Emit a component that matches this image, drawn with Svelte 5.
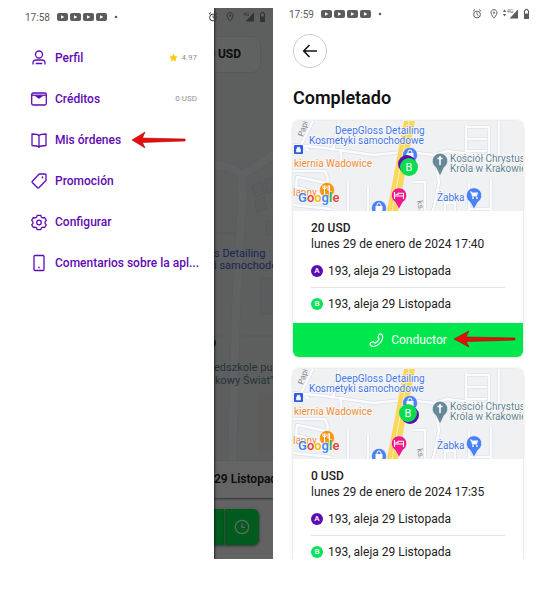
<script>
  let menu = [
    { id: 'profile', label: 'Perfil', value: '4.97', star: true },
    { id: 'wallet', label: 'Créditos', value: '0 USD' },
    { id: 'orders', label: 'Mis órdenes', marked: true },
    { id: 'promo', label: 'Promoción' },
    { id: 'settings', label: 'Configurar' },
    { id: 'feedback', label: 'Comentarios sobre la apl...' }
  ];

  let orders = [
    { price: '20 USD', date: 'lunes 29 de enero de 2024 17:40', from: '193, aleja 29 Listopada', to: '193, aleja 29 Listopada', driver: true, markerX: 116, markerY: 46, underX: 114, underY: 43 },
    { price: '0 USD', date: 'lunes 29 de enero de 2024 17:35', from: '193, aleja 29 Listopada', to: '193, aleja 29 Listopada', driver: false, markerX: 115, markerY: 44, underX: 117, underY: 46 }
  ];

  // shared by the dark edge and the light fill of the small streets
  const streets = 'M0 24L32 27 80 34 112 31 142 34 154 30 230 40M20 0L8 24 16 30M0 50H32Q36 58 34 62L4 56 3 66 26 72M55 62V90M75 90V65M142 32L146 62 140 90M173 4V46M173 6H196V45M173 18H194M173 30H194M170 46H230M120 61H132V90M152 90V82H162V90M176 90V62M198 90V58M176 88H198M48 30V50M0 84L38 88M40 30L46 0M206 0V40';
  const avenue = 'M200 155Q232 157 241 167Q250 163 276 145M241 165Q244 185 241 210L236 300 232 460';
</script>

{#snippet notifications(time)}
  <span class="time">{time}</span>
  <svg class="notes" width="66" height="10" viewBox="0 0 66 10" aria-hidden="true">
    {#each [0, 1, 2, 3] as n}
      <rect x={n * 13 + 1} y="1" width="11" height="8" rx="2" fill="#5c5c5c" />
      <path d="M{n * 13 + 5} 3.2l3.4 1.8-3.4 1.8z" fill="#fff" />
    {/each}
    <circle cx="60" cy="5" r="1.3" fill="#5c5c5c" />
  </svg>
{/snippet}

{#snippet signals(arrows)}
  <svg class="signals" width="58" height="12" viewBox="0 0 58 12" aria-hidden="true">
    <g fill="none" stroke="currentColor" stroke-width="1">
      <circle cx="5" cy="6.5" r="3.4" />
      <path d="M5 4.5v2l1.4 1M1 3.2l2-1.8M9 3.2l-2-1.8" />
      <path d="M22 1.7c-1.8 0-3 1.3-3 2.9 0 2 3 5.6 3 5.6s3-3.6 3-5.6c0-1.6-1.2-2.9-3-2.9z" />
      <circle cx="22" cy="4.7" r=".7" />
    </g>
    <path d="M46 1.5v9h-8.5z" fill="currentColor" />
    {#if arrows}
      <path d="M32.5 1.5l1.6 2.4h-3.2zM32.5 8.5l1.6-2.4h-3.2z" fill="currentColor" />
    {/if}
    <text x="35" y="5" font-size="5" fill="currentColor">4G</text>
    <path d="M52.5 2.5h1v-1.2h2v1.2h1v8h-4z" fill="none" stroke="currentColor" />
    <path d="M52 5.5h5v5.5h-5z" fill="currentColor" />
  </svg>
{/snippet}

{#snippet arrow()}
  <svg class="arrow" viewBox="0 0 62 18" width="100%" height="18" preserveAspectRatio="none" aria-hidden="true">
    <path d="M0 9L15 1L12 7L61 8V10L12 11.5L15 17Z" fill="#e80c0c" stroke="#9b1010" stroke-width=".6" />
  </svg>
{/snippet}

{#snippet menuIcon(id)}
  <svg class="menu-icon" width="18" height="18" viewBox="0 0 18 18" aria-hidden="true">
    {#if id === 'profile'}
      <circle cx="9" cy="5.5" r="3.5" />
      <path d="M3 15.5v-1.5c0-2 1.6-3 3.3-3h5.400c1.700 0 3.300 1 3.300 3v1.500M5.700 14.500h6.600" />
    {:else if id === 'wallet'}
      <rect x="1.7" y="3" width="14.6" height="12" rx="1.5" />
      <path d="M2 5.200h14" />
      <path d="M5.500 6h7L9 8.500z" fill="currentColor" stroke-width=".6" />
    {:else if id === 'orders'}
      <path d="M9 4.500C7.300 3 5 3 2 3v11.500c3 0 5.300 0 7 1.700 1.700-1.700 4-1.700 7-1.700V3c-3 0-5.300 0-7 1.500zM9 4.500v11.500" />
    {:else if id === 'promo'}
      <path d="M9.200 2H15.300l.7.7v5.800L8.800 15.800c-.5.4-.9.4-1.300 0L2.300 10.500c-.4-.5-.4-.9 0-1.300z" />
      <circle cx="12.5" cy="5.3" r=".7" fill="currentColor" stroke-width=".5" />
    {:else if id === 'settings'}
      <path d="M7.300 2.300h3.400l.7 1.900 1.300.7 2-.4 1.600 2.800-1.300 1.600.1 1.500 1.200 1.500-1.700 2.600-2-.3-1.200.7-.7 1.800H7.300l-.7-1.800-1.200-.7-2 .3-1.700-2.600L3 10.400 3 8.900 1.700 7.300l1.600-2.800 2 .4 1.300-.7z" />
      <circle cx="9" cy="9.5" r="2.3" />
    {:else}
      <rect x="4" y="1.5" width="10" height="15" rx="1" />
      <path d="M8.300 13.500h1.400" />
    {/if}
  </svg>
{/snippet}

{#snippet orderMap(order)}
  <svg class="map" viewBox="0 0 230 90" preserveAspectRatio="xMinYMin slice" role="img" aria-label="Mapa">
    <rect width="600" height="240" fill="#eff1f3" />
    <path d={streets} fill="none" stroke="#dde1e6" stroke-width="4" stroke-linejoin="round" />
    <path d={streets} fill="none" stroke="#fbfcfd" stroke-width="2.5" stroke-linejoin="round" />
    <path d="M111 0H122L105 90H94Z" fill="#fbd75b" />
    <path d="M116 0L99 90" stroke="#fff0b0" stroke-width="1" />

    <g class="label" font-size="10">
      <g fill="#4273e8">
        <text x="42" y="13">DeepGloss Detailing</text>
        <text x="16" y="23">Kosmetyki samochodowe</text>
        <text x="144" y="80">Żabka</text>
      </g>
      <g fill="#f08732">
        <text x="1" y="46">kiernia Wadowice</text>
        <text x="0" y="75">lanny</text>
      </g>
      <g fill="#5c7f8e">
        <text x="157" y="41">Kościół Chrystusa</text>
        <text x="157" y="51">Króla w Krakowie</text>
      </g>
    </g>
    <text x="10" y="16" font-size="8" fill="#80868b" transform="rotate(-72 10 16)">Papi</text>
    <text x="124" y="80" font-size="8" fill="#80868b" transform="rotate(80 124 80)">ks.</text>

    <rect x="1" y="24" width="9" height="9" rx="1" fill="#2f5be0" />
    <path d="M3.500 31v-3h4v3zM4.300 28v-1.800h2.400V28" fill="#fff" stroke="#fff" stroke-width=".6" />

    <g fill="#4b80f6" stroke="#fff" stroke-width=".5">
      <circle cx="117" cy="34" r="7.5" />
      <circle cx="86" cy="87" r="7.5" />
      <path d="M181 88l-4-7a7.700 7.700 0 1 1 8 0z" />
    </g>
    <g fill="#fff">
      <path d="M113.500 32h7v5h-7zM82.500 85h7v5h-7z" />
      <path d="M115 32.500v-1.500a2 2 0 0 1 4 0v1.500M84 85.500V84a2 2 0 0 1 4 0v1.500" fill="none" stroke="#fff" />
      <path d="M177 70.500h1.500l.6 1h6l-1.300 4h-4.800l-1-4H177z" />
      <circle cx="180" cy="77" r=".9" />
      <circle cx="184" cy="77" r=".9" />
    </g>
    <path d="M106 88l-4-7a7.700 7.700 0 1 1 8 0z" fill="#f0198c" stroke="#fff" stroke-width=".5" />
    <path d="M101.500 71v7M110.500 77.500v-2.500h-9M110.500 75v3M102.500 73.500h2M105 74v-1.700h5.500V75" fill="none" stroke="#fff" stroke-width="1.1" />
    <circle cx="34" cy="69" r="7.5" fill="#f59714" stroke="#fff" stroke-width=".5" />
    <path d="M31.500 64.500v9M30 64.500v3h3v-3M36.500 64.500v9M36.500 65h-1.500v4h1.500" fill="none" stroke="#fff" />
    <path d="M147 55l-4-8.500a7.700 7.700 0 1 1 8 0z" fill="#678896" stroke="#fff" stroke-width=".5" />
    <path d="M147 35v9M144.500 37.500h5" stroke="#fff" stroke-width="1.5" />

    <circle cx={order.underX} cy={order.underY} r="9" fill="#5c0fae" />
    <circle cx={order.markerX} cy={order.markerY} r="9" fill="#09dc4e" />
    <text x={order.markerX} y={order.markerY + 4} font-size="11" fill="#fff" text-anchor="middle">B</text>

    <text class="google" x="5" y="81" font-size="13"><tspan fill="#4285f4">G</tspan><tspan fill="#ea4335">o</tspan><tspan fill="#fbbc05">o</tspan><tspan fill="#4285f4">g</tspan><tspan fill="#34a853">l</tspan><tspan fill="#ea4335">e</tspan></text>
  </svg>
{/snippet}

<div class="screens">
  <section class="screen home">
    <div class="backdrop">
      <div class="city">
        <svg viewBox="0 0 273 453" preserveAspectRatio="xMaxYMin slice" aria-hidden="true">
          <rect width="273" height="600" fill="#e9eeee" />
          <path d={avenue} fill="none" stroke="#dfe4e8" stroke-width="10" />
          <path d="M200 225H237M200 328H222M242 328H275M200 120" fill="none" stroke="#dfe4e8" stroke-width="3" />
          <path d={avenue} fill="none" stroke="#f1f3f5" stroke-width="8" />
          <path d="M252 178l10-5 3 12-10 5zM265 172l10-4v15l-8 2zM254 193l10-4 3 12-10 3zM266 213h9v14h-9zM261 270h14v36h-14z" fill="#e1e5ea" stroke="#d6dbe2" />
          <path d="M258 395h16v-10h-16zM258 395v50h16v-50z" fill="#ece5e1" />
          <g font-size="11">
            <text x="214" y="249" fill="#3c62d6">s Detailing</text>
            <text x="214" y="261" fill="#3c62d6">i samochodo</text>
            <text x="214" y="363" fill="#5c7f8e">edszkole pub</text>
            <text x="215" y="376" fill="#5c7f8e">kowy Świat"</text>
          </g>
          <circle cx="211" cy="335" r="5" fill="#3e4f57" />
        </svg>
        <div class="price">0 USD</div>
      </div>
      <div class="address">29 Listopad</div>
      <div class="booking">
        <button class="order" aria-label="Pedir"></button>
        <button class="later" aria-label="Programar">
          <svg width="16" height="16" viewBox="0 0 16 16" fill="none" stroke="#fff" stroke-width="1.2" aria-hidden="true">
            <circle cx="8" cy="8" r="6.7" />
            <path d="M8 4.500V8.300h3" />
          </svg>
        </button>
      </div>
    </div>
    <div class="scrim"></div>

    <nav class="drawer">
      {#each menu as item}
        <a href="#{item.id}" class="menu-item">
          {@render menuIcon(item.id)}
          <span class="menu-label">{item.label}</span>
          {#if item.marked}
            <span class="pointer">{@render arrow()}</span>
          {/if}
          {#if item.value}
            <span class="menu-value">
              {#if item.star}
                <svg width="9" height="9" viewBox="0 0 10 10" aria-hidden="true">
                  <path d="M5 .5l1.400 3 3.300.4-2.400 2.300.6 3.300L5 7.900 2.100 9.500l.6-3.300L.3 3.900l3.300-.4z" fill="#fdc70c" />
                </svg>
              {/if}
              {item.value}
            </span>
          {/if}
        </a>
      {/each}
    </nav>

    <header class="status over">
      {@render notifications('17:58')}
      {@render signals(false)}
    </header>
  </section>

  <section class="screen history">
    <header class="status">
      {@render notifications('17:59')}
      {@render signals(true)}
    </header>

    <main>
      <button class="back" aria-label="Atrás">
        <svg width="16" height="16" viewBox="0 0 16 16" fill="none" stroke="#151515" stroke-width="1.6" aria-hidden="true">
          <path d="M15 8H2M7.500 2L1.700 8l5.800 6" />
        </svg>
      </button>
      <h1>Completado</h1>

      {#each orders as order}
        <article class="card">
          {@render orderMap(order)}
          <div class="details">
            <strong>{order.price}</strong>
            <time>{order.date}</time>
            <ul>
              <li><span class="point start">A</span>{order.from}</li>
              <li><span class="point end">B</span>{order.to}</li>
            </ul>
          </div>
          {#if order.driver}
            <button class="driver">
              <svg width="15" height="15" viewBox="0 0 16 16" fill="none" stroke="#fff" stroke-width="1.2" stroke-linejoin="round" aria-hidden="true">
                <path d="M10.700 1.500l1.500-.6c1.400.5 2.500 2 2.400 4-.4 4.500-5 8.800-9.400 9.400-2 .2-3.700-.8-4.200-2.300l.8-1.700 3-.9 1.700 1.400c2-.9 3.500-2.400 4.400-4.300L9.600 4.700z" />
              </svg>
              Conductor
              <span class="callout">{@render arrow()}</span>
            </button>
          {/if}
        </article>
      {/each}
    </main>
  </section>
</div>

<style>
  :global(body) {
    background: #fff;
  }

  .screens {
    display: flex;
    height: calc(100vh - 34px);
    font-family: Roboto, 'Liberation Sans', sans-serif;
    font-size: 12px;
    color: #222;
  }

  .screen {
    flex: 1;
    min-width: 0;
    position: relative;
    overflow: hidden;
  }

  .home {
    margin-top: 8px;
  }

  button {
    border: none;
    padding: 0;
    font: inherit;
    cursor: pointer;
  }

  svg {
    display: block;
    flex-shrink: 0;
  }

  /* status bar */
  .status {
    display: flex;
    align-items: center;
    box-sizing: border-box;
    height: 28px;
    padding: 0 16px;
    color: #5c5c5c;
  }

  .status.over {
    position: absolute;
    top: 0;
    left: 0;
    right: 0;
    height: 18px;
    padding: 0 7px 0 25px;
    color: #333;
  }

  .time {
    font-size: 10px;
    color: #5c5c5c;
  }

  .notes {
    margin-left: 6px;
  }

  .signals {
    margin-left: auto;
  }

  /* home screen behind the drawer */
  .backdrop {
    display: flex;
    flex-direction: column;
    isolation: isolate;
    height: 100%;
    background: #f4f5f5;
  }

  .city {
    flex: 1;
    min-height: 0;
    position: relative;
  }

  .city svg {
    width: 100%;
    height: 100%;
  }

  .price {
    position: absolute;
    top: 29px;
    right: 13px;
    padding: 0 19px;
    border-radius: 8px;
    background: #f1f4f4;
    box-shadow: 0 0 2px rgba(0, 0, 0, 0.2);
    font-weight: 700;
    line-height: 35px;
  }

  .address {
    height: 37px;
    padding-left: 214px;
    overflow: hidden;
    background: #fafafa;
    box-shadow: 0 1px 2px rgba(0, 0, 0, 0.5);
    font-weight: 600;
    line-height: 37px;
    white-space: nowrap;
    z-index: 1;
  }

  .booking {
    display: flex;
    gap: 1px;
    padding: 11px 14px 14px;
  }

  .booking button {
    height: 36px;
    background: #00e64d;
    box-shadow: 0 1px 3px rgba(0, 0, 0, 0.5);
  }

  .order {
    flex: 1;
    border-radius: 6px 0 0 6px;
  }

  .later {
    display: flex;
    align-items: center;
    justify-content: center;
    width: 34px;
    border-radius: 0 6px 6px 0;
  }

  .scrim {
    position: absolute;
    inset: 0;
    background: rgba(0, 0, 0, 0.6);
  }

  /* drawer */
  .drawer {
    position: absolute;
    inset: 0 59px 0 0;
    box-sizing: border-box;
    padding: 29px 17px 0 30px;
    background: #fff;
    box-shadow: 1px 0 2px rgba(0, 0, 0, 0.6);
  }

  .menu-item {
    display: flex;
    align-items: center;
    height: 41px;
    color: #5f0bb4;
    font-weight: 500;
    text-decoration: none;
    white-space: nowrap;
  }

  .menu-icon {
    margin-right: 7px;
    fill: none;
    stroke: currentColor;
    stroke-width: 1.3;
    stroke-linejoin: round;
  }

  .pointer {
    width: 54px;
    margin-left: 11px;
  }

  .menu-value {
    display: flex;
    align-items: center;
    gap: 3px;
    margin-left: auto;
    color: #909090;
    font-size: 8px;
    font-weight: 400;
  }

  /* order history */
  main {
    padding: 6px 23px 0 20px;
  }

  .back {
    display: flex;
    align-items: center;
    justify-content: center;
    width: 34px;
    height: 34px;
    border: 1px solid #ccc;
    border-radius: 50%;
    background: #fff;
  }

  h1 {
    margin: 16px 0 9px;
    color: #111;
    font-size: 18px;
    font-weight: 600;
    line-height: 28px;
  }

  .card {
    margin-bottom: 12px;
    overflow: hidden;
    border-radius: 6px;
    background: #fff;
    box-shadow: 0 0 3px rgba(0, 0, 0, 0.2);
  }

  .map {
    width: 100%;
    height: 90px;
  }

  .google {
    font-weight: 600;
    paint-order: stroke;
    stroke: #fff;
    stroke-width: 1px;
  }

  .label {
    paint-order: stroke;
    stroke: #fff;
    stroke-width: 1px;
  }

  .details {
    padding: 9px 18px 3px;
    line-height: 16px;
  }

  .details strong,
  .details time {
    display: block;
  }

  .details strong {
    font-weight: 500;
  }

  ul {
    margin: 3px 0 0;
    padding: 0;
    list-style: none;
  }

  li {
    display: flex;
    align-items: center;
    gap: 5px;
    height: 32px;
  }

  li + li {
    border-top: 1px solid #e4e4e4;
  }

  .point {
    width: 12px;
    height: 12px;
    border-radius: 50%;
    color: #fff;
    font-size: 8px;
    font-weight: 500;
    line-height: 12px;
    text-align: center;
  }

  .point.start {
    background: #5f0bb4;
  }

  .point.end {
    background: #09e35a;
  }

  .driver {
    display: flex;
    align-items: center;
    justify-content: center;
    gap: 7px;
    position: relative;
    width: 100%;
    height: 34px;
    background: #00e64d;
    color: #fff;
  }

  .callout {
    position: absolute;
    top: 7px;
    right: 7px;
    width: 62px;
  }
</style>
